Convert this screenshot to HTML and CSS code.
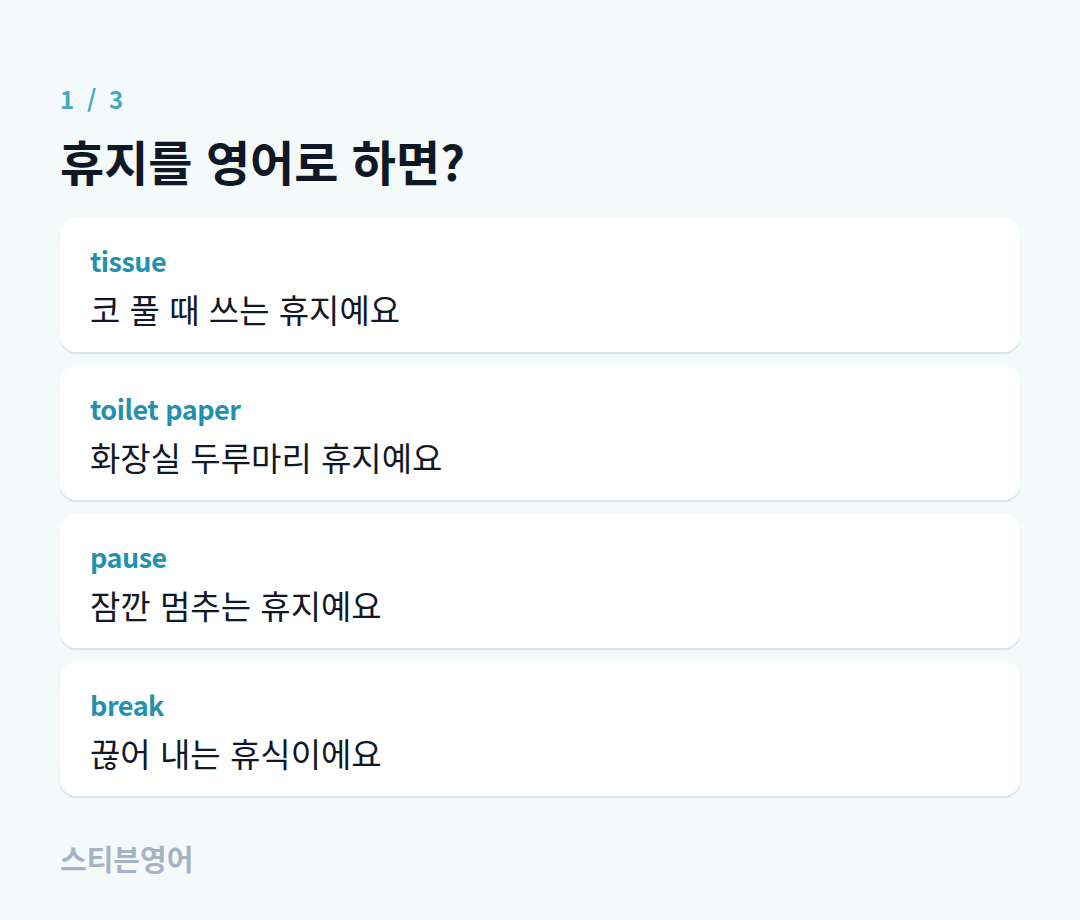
FILE: index.html
```html
<!DOCTYPE html>
<html lang="ko">
<head>
    <meta charset="UTF-8">
    <meta name="viewport" content="width=device-width, initial-scale=1.0">
    <title>휴지를 영어로 하면?</title>
    <link rel="stylesheet" href="styles.css">
</head>
<body>

    <div class="quiz">
        <div class="counter">1 / 3</div>
        <h1 class="question">휴지를 영어로 하면?</h1>

        <div class="answers">
            <div class="answer">
                <div class="word">tissue</div>
                <div class="meaning">코 풀 때 쓰는 휴지예요</div>
            </div>
            <div class="answer">
                <div class="word">toilet paper</div>
                <div class="meaning">화장실 두루마리 휴지예요</div>
            </div>
            <div class="answer">
                <div class="word">pause</div>
                <div class="meaning">잠깐 멈추는 휴지예요</div>
            </div>
            <div class="answer">
                <div class="word">break</div>
                <div class="meaning">끊어 내는 휴식이에요</div>
            </div>
        </div>

        <div class="brand">스티븐영어</div>
    </div>

</body>
</html>
```

FILE: styles.css
```css
body {
    margin: 0;
    background-color: #f4f9fa;
    font-family: "Noto Sans CJK KR", "Noto Sans", sans-serif;
    color: #111827;
}
.quiz {
    padding: 82px 60px 40px;
}
.counter {
    font-size: 24px;
    font-weight: 700;
    color: #4aa6c2;
    letter-spacing: 2.5px;
    word-spacing: 1px;
    line-height: 34px;
}
.question {
    font-size: 48px;
    font-weight: 700;
    line-height: 60px;
    margin: 14px 0 28px;
    color: #101828;
}
.answers {
    display: flex;
    flex-direction: column;
    gap: 14px;
}
.answer {
    background-color: #fff;
    border-radius: 16px;
    padding: 24px 30px 20px;
    box-shadow: 0 2px 1px #d5e3ea;
}
.word {
    font-size: 27px;
    font-weight: 700;
    color: #2391ad;
    line-height: 38px;
    letter-spacing: -0.5px;
}
.meaning {
    font-size: 33px;
    line-height: 46px;
    margin-top: 6px;
    color: #111827;
}
.brand {
    margin-top: 42px;
    font-size: 29px;
    font-weight: 700;
    color: #a6b3c6;
    line-height: 40px;
}
```
